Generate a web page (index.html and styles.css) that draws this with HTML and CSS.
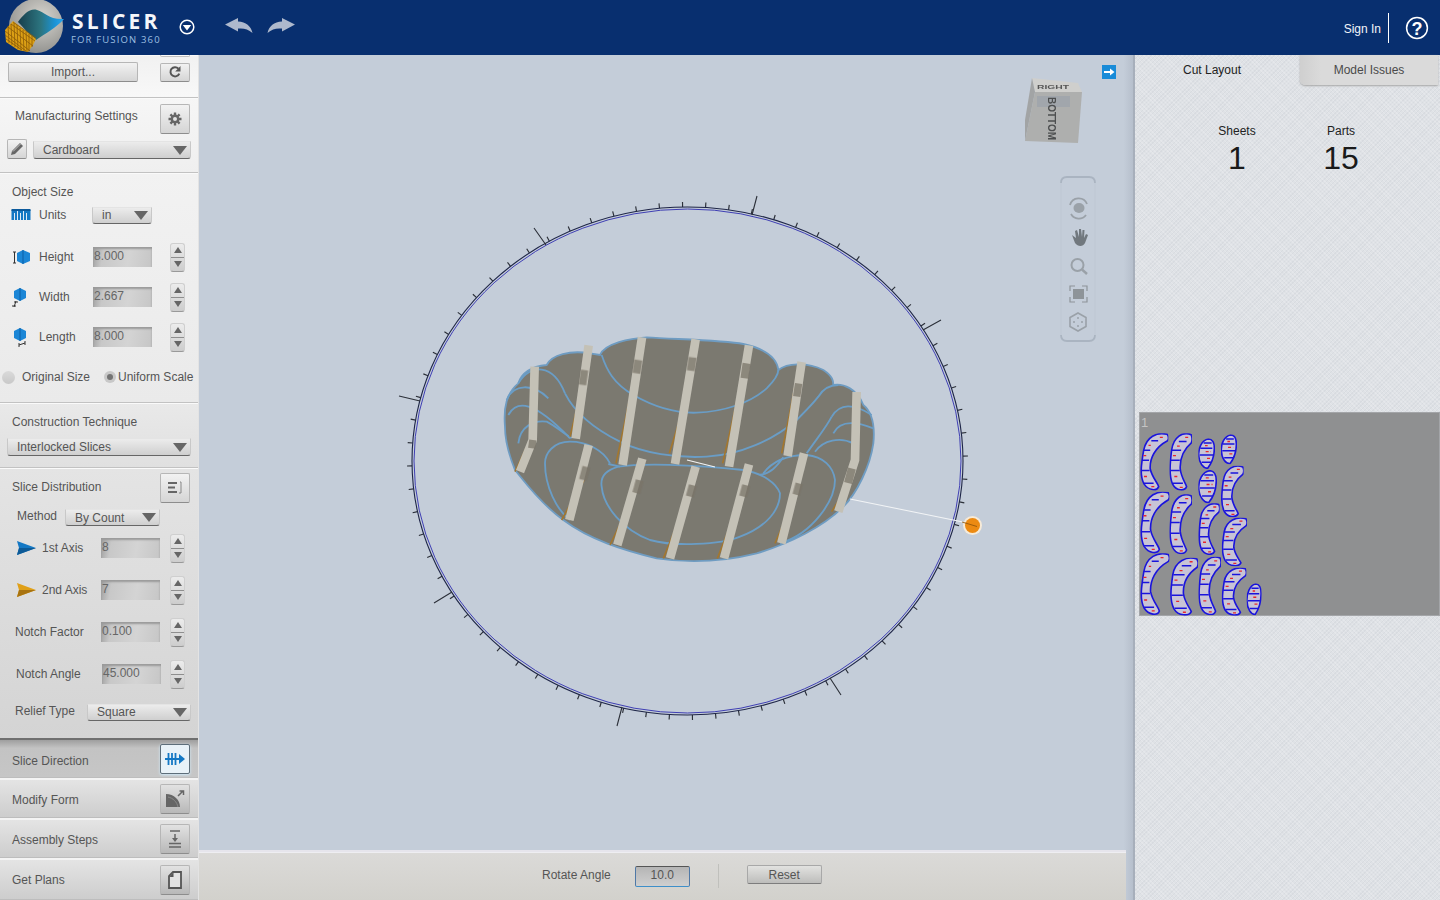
FILE: index.html
```html
<!DOCTYPE html>
<html lang="en">
<head>
<meta charset="utf-8">
<title>Slicer for Fusion 360</title>
<link rel="stylesheet" href="styles.css">
</head>
<body>
<header class="topbar">
  <div class="brand">
    <svg class="logo" width="68" height="55" viewBox="0 0 68 55">
      <defs>
        <linearGradient id="sw" x1="0" y1="0" x2="1" y2="0"><stop offset="0" stop-color="#173e4c"/><stop offset=".5" stop-color="#2c7580"/><stop offset=".8" stop-color="#1b93d6"/><stop offset="1" stop-color="#2aa8f0"/></linearGradient>
        <radialGradient id="disc" cx=".6" cy=".35" r=".7"><stop offset="0" stop-color="#d8d6d0"/><stop offset="1" stop-color="#8f8f8c"/></radialGradient>
      </defs>
      <circle cx="36" cy="26" r="27" fill="url(#disc)"/>
      <path d="M18 22 C24 14 30 8 37 10 C45 12 49 20 64 19 C56 28 46 33 36 40 C30 36 24 28 18 22Z" fill="url(#sw)"/>
      <path d="M5 30 L13 21 L36 39 L33 45 L28 52 L18 50 L6 42Z" fill="#dca015"/>
      <g stroke="#8a5a08" stroke-width=".8" fill="none">
        <path d="M5 31 L30 51M5 35 L26 51M6 39 L22 50M8 27 L33 46M11 24 L35 41M13 22 L36 38"/>
        <path d="M8 26 L9 43M11 24 L12 45M14 23 L15 47M17 25 L18 49M20 28 L21 50M23 30 L24 51M26 32 L27 52M29 34 L29 51M32 36 L32 47"/>
      </g>
    </svg>
    <div class="wordmark">
      <div class="wm-main">SLICER</div>
      <div class="wm-sub">FOR FUSION 360</div>
    </div>
    <svg class="menu-dot" width="16" height="16" viewBox="0 0 16 16"><circle cx="8" cy="8" r="6.8" fill="none" stroke="#fff" stroke-width="1.5"/><path d="M3.800 6 H12.200 L8 11.400Z" fill="#fff"/></svg>
    <svg class="hist" width="28" height="18" viewBox="0 0 28 18"><path d="M0 7.500 L13 1 V4.500 C21 5 26 9 27.500 16 C23 12 19 11 13 11.500 V14.500Z" fill="#aeb9cd"/></svg>
    <svg class="hist" width="28" height="18" viewBox="0 0 28 18"><path d="M28 7.500 L15 1 V4.500 C7 5 2 9 .5 16 C5 12 9 11 15 11.500 V14.500Z" fill="#aeb9cd"/></svg>
  </div>
  <div class="account">
    <span class="signin">Sign In</span>
    <span class="sep"></span>
    <svg width="24" height="24" viewBox="0 0 24 24"><circle cx="12" cy="12" r="10.400" fill="none" stroke="#fff" stroke-width="1.500"/><text x="12" y="18.500" text-anchor="middle" class="help-q">?</text></svg>
  </div>
</header>

<main class="app">
  <aside class="side">
    <section class="sec sec-import">
      <div class="clipped"></div>
      <div class="line">
        <button class="btn btn-import">Import...</button>
        <button class="btn btn-refresh">
          <svg width="14" height="14" viewBox="0 0 14 14"><path d="M11.300 8.600 A4.600 4.600 0 1 1 10.400 3.600" fill="none" stroke="#555" stroke-width="2"/><path d="M12.500 1 V6.400 H7.200Z" fill="#555"/></svg>
        </button>
      </div>
    </section>

    <section class="sec sec-mfg">
      <div class="line mfg-title">
        <span class="lbl mfg-lbl">Manufacturing Settings</span>
        <button class="btn btn-square">
          <svg width="16" height="16" viewBox="0 0 16 16"><circle cx="8" cy="8" r="3.200" fill="none" stroke="#666" stroke-width="2.400"/><path d="M8 1.500V14.500M1.500 8H14.500M3.400 3.400L12.600 12.600M12.600 3.400L3.400 12.600" stroke="#666" stroke-width="2.400" stroke-dasharray="3 7"/></svg>
        </button>
      </div>
      <div class="line mfg-pick">
        <button class="btn btn-pencil">
          <svg width="16" height="16" viewBox="0 0 16 16"><path d="M2 14 L3 10 L11 2 L14 5 L6 13Z" fill="#666"/><path d="M4 10.500L11.500 3" stroke="#ddd" stroke-width=".8"/></svg>
        </button>
        <div class="select sel-mfg"><span>Cardboard</span><i class="caret"></i></div>
      </div>
    </section>

    <section class="sec sec-size">
      <div class="lbl sec-title">Object Size</div>
      <div class="fld fld-units">
        <svg class="fld-ico" width="19" height="12" viewBox="0 0 19 12"><rect x="0" y="1" width="19" height="10" fill="#1478c4"/><path d="M3 4V11M6 2V11M9 4V11M12 2V11M15 4V11" stroke="#dfeaf5" stroke-width="1"/><rect y="0" width="19" height="2" fill="#0c5a9c"/></svg>
        <span class="lbl fld-lbl">Units</span>
        <div class="select sel-units"><span>in</span><i class="caret"></i></div>
      </div>
      <div class="fld fld-h">
        <svg class="fld-ico" width="20" height="18" viewBox="0 0 20 18"><path d="M2 4H5M3.500 4V15M2 15H5" stroke="#333" stroke-width="1"/><path d="M6 5 L12 2 L19 5 V13 L12 16 L6 13Z" fill="#1b86d6"/><path d="M12 2V16" stroke="#0b5ea6"/></svg>
        <span class="lbl fld-lbl">Height</span>
        <div class="input inp-size">8.000</div>
        <div class="stepper"><i class="up"></i><i class="dn"></i></div>
      </div>
      <div class="fld fld-h">
        <svg class="fld-ico" width="20" height="20" viewBox="0 0 20 20"><path d="M3 4 L9 1 L15 4 V11 L9 14 L3 11Z" fill="#1b86d6"/><path d="M9 1V14" stroke="#0b5ea6"/><path d="M5 14 L3 20M3 15H7M1 19H5" stroke="#333" stroke-width="1"/></svg>
        <span class="lbl fld-lbl">Width</span>
        <div class="input inp-size">2.667</div>
        <div class="stepper"><i class="up"></i><i class="dn"></i></div>
      </div>
      <div class="fld fld-h">
        <svg class="fld-ico" width="20" height="20" viewBox="0 0 20 20"><path d="M3 4 L9 1 L15 4 V11 L9 14 L3 11Z" fill="#1b86d6"/><path d="M9 1V14" stroke="#0b5ea6"/><path d="M8 18 L14 16M8 16V20M14 14V18" stroke="#333" stroke-width="1"/></svg>
        <span class="lbl fld-lbl">Length</span>
        <div class="input inp-size">8.000</div>
        <div class="stepper"><i class="up"></i><i class="dn"></i></div>
      </div>
      <div class="radios">
        <i class="radio"></i><span class="lbl">Original Size</span>
        <i class="radio on"></i><span class="lbl">Uniform Scale</span>
      </div>
    </section>

    <section class="sec sec-tech">
      <div class="lbl sec-title">Construction Technique</div>
      <div class="select sel-tech"><span>Interlocked Slices</span><i class="caret"></i></div>
    </section>

    <section class="sec sec-dist">
      <div class="line dist-title">
        <span class="lbl">Slice Distribution</span>
        <button class="btn btn-square">
          <svg width="16" height="16" viewBox="0 0 16 16"><path d="M1 3H10M1 7.500H8M1 12H10" stroke="#666" stroke-width="2"/><path d="M13 2H14V13H12" fill="none" stroke="#888"/></svg>
        </button>
      </div>
      <div class="method">
        <span class="lbl method-lbl">Method</span>
        <div class="select sel-method"><span>By Count</span><i class="caret"></i></div>
      </div>
      <div class="axis">
        <svg class="axis-ico" width="20" height="14" viewBox="0 0 20 14"><path d="M1 0 L20 7 L1 14 L3 7Z" fill="#1478c4"/><path d="M3 7 L20 7 L1 14Z" fill="#0d5a96"/></svg>
        <span class="lbl axis-lbl">1st Axis</span>
        <div class="input inp-axis">8</div>
        <div class="stepper"><i class="up"></i><i class="dn"></i></div>
      </div>
      <div class="axis">
        <svg class="axis-ico" width="20" height="14" viewBox="0 0 20 14"><path d="M1 0 L20 7 L1 14 L3 7Z" fill="#e0a018"/><path d="M3 7 L20 7 L1 14Z" fill="#a87310"/></svg>
        <span class="lbl axis-lbl">2nd Axis</span>
        <div class="input inp-axis">7</div>
        <div class="stepper"><i class="up"></i><i class="dn"></i></div>
      </div>
      <div class="axis">
        <span class="lbl notch-lbl">Notch Factor</span>
        <div class="input inp-axis">0.100</div>
        <div class="stepper"><i class="up"></i><i class="dn"></i></div>
      </div>
      <div class="axis">
        <span class="lbl notch-lbl notch-angle">Notch Angle</span>
        <div class="input inp-axis">45.000</div>
        <div class="stepper stepper-angle"><i class="up"></i><i class="dn"></i></div>
      </div>
      <div class="relief">
        <span class="lbl relief-lbl">Relief Type</span>
        <div class="select sel-relief"><span>Square</span><i class="caret"></i></div>
      </div>
    </section>

    <section class="acc acc-on">
      <span class="lbl">Slice Direction</span>
      <button class="btn btn-square btn-active">
        <svg width="20" height="14" viewBox="0 0 20 14"><path d="M0 7H15M3.500 1V13M7 1V13M10.500 1V13" stroke="#1478c4" stroke-width="1.800"/><path d="M14 2 L20 7 L14 12Z" fill="#1478c4"/></svg>
      </button>
    </section>
    <section class="acc">
      <span class="lbl">Modify Form</span>
      <button class="btn btn-square">
        <svg width="20" height="18" viewBox="0 0 20 18"><path d="M1 4 C9 4 15 10 15 17 H1Z" fill="#666"/><path d="M3 7 C8 8 12 12 13 17" fill="none" stroke="#8a8a8a" stroke-width="1"/><path d="M13 6 L18 1M14.500 1H18.500V5" fill="none" stroke="#666" stroke-width="1.500"/></svg>
      </button>
    </section>
    <section class="acc">
      <span class="lbl">Assembly Steps</span>
      <button class="btn btn-square">
        <svg width="16" height="20" viewBox="0 0 16 20"><path d="M3 2H13" stroke="#666" stroke-width="1.500"/><path d="M8 5V11" stroke="#666" stroke-width="1.500"/><path d="M5 9H11L8 13Z" fill="#666"/><path d="M2 14.500H14M2 18H14" stroke="#666" stroke-width="1.500"/></svg>
      </button>
    </section>
    <section class="acc acc-last">
      <span class="lbl">Get Plans</span>
      <button class="btn btn-square">
        <svg width="14" height="18" viewBox="0 0 14 18"><path d="M5 1H13V17H1V5Z" fill="#e2e2e2" stroke="#555" stroke-width="1.800"/><path d="M5.500 1.500V6H1.500Z" fill="#555"/></svg>
      </button>
    </section>
  </aside>

  <div class="stage">
    <svg class="scene" viewBox="199 55 934 845" width="934" height="845">
      <ellipse cx="687.500" cy="461" rx="278" ry="256.500" fill="none" stroke="#2b2f38" stroke-width="5" pathLength="72" stroke-dasharray="0.05 0.95" stroke-dashoffset="-0.76"/>
      <ellipse cx="687.500" cy="461" rx="273.500" ry="252" fill="none" stroke="#3f3fb4" stroke-width="1"/>
      <ellipse cx="687.500" cy="461" rx="275.500" ry="254" fill="none" stroke="#1e2547" stroke-width="1.100"/>
      <g stroke="#2b2f38" stroke-width="1.100">
        <path d="M757 196L752 215M534 228L546 245M399 396L420 401M434 603L452 592M617 726L622 707M841 695L830 678M941 320L923 330"/>
      </g>
      <svg x="490" y="320" width="400" height="260" viewBox="0 0 1200 780">
        <path d="M45 320 C40 260 50 220 85 190 C95 160 120 140 170 135 C185 105 240 90 300 100 L330 105 C345 70 420 55 470 52 C560 58 700 60 760 72 C820 85 860 110 865 150 C890 130 950 125 1000 150 C1030 170 1030 185 1030 195 C1060 190 1100 205 1120 255 C1150 280 1155 320 1150 370 C1140 440 1100 520 1060 560 C1000 620 900 670 800 700 C700 725 600 730 500 715 C400 690 300 660 220 600 C150 550 100 480 75 450 C55 400 45 360 45 320Z" fill="#7b7970" stroke="#6f9cc2" stroke-width="5.500"/>
        <g fill="none" stroke="#6a9dc6" stroke-width="5.500">
          <path d="M335 105 C350 150 370 190 430 225 C500 265 560 280 620 278 C700 275 780 250 830 205 C850 185 865 165 865 150"/>
          <path d="M225 220 C250 270 300 320 390 365 C460 400 560 415 650 410 C750 405 850 360 920 300 C960 260 970 250 985 230 C1000 205 1020 195 1045 195"/>
          <path d="M335 500 C330 470 350 450 385 440 C450 430 600 432 760 450 C820 460 860 490 870 520 C870 570 830 620 750 650 C690 675 550 680 480 660 C400 630 340 560 335 500Z"/>
          <path d="M360 430 C340 390 290 365 240 365 C190 365 165 400 165 430 C165 500 200 570 240 600"/>
          <path d="M820 460 C850 420 900 405 950 405 C1000 410 1030 440 1035 480 C1035 540 970 640 870 670"/>
          <path d="M85 190 C120 130 190 130 225 220"/>
          <path d="M50 240 C70 190 130 190 175 235"/>
          <path d="M55 285 C80 240 130 240 240 355"/>
          <path d="M85 370 C90 320 130 300 170 305 C200 320 220 340 245 355"/>
          <path d="M1025 290 C1050 250 1090 250 1145 285"/>
          <path d="M1030 340 C1050 300 1100 305 1150 325"/>
          <path d="M975 395 C1000 360 1050 350 1090 370"/>
          <path d="M950 400 C985 350 1010 320 1025 290"/>
          <path d="M810 464 C840 462 860 440 880 412"/>
          <path d="M355 432 L390 440"/>
        </g>
        <g fill="none" stroke="#a3772f" stroke-width="5">
          <path d="M440 140 L378 430M600 200 L538 400M760 160 L698 430M915 200 L875 400M277 200 L240 350M440 510 L360 675M600 520 L520 715M760 520 L682 715M925 510 L855 670M282 480 L215 600M1085 480 L1025 575M120 360 L75 455"/>
        </g>
        <g fill="none" stroke="#c4c1b6" stroke-width="26">
          <path d="M456 52 L398 435"/>
          <path d="M617 58 L555 432"/>
          <path d="M777 76 L717 440"/>
          <path d="M935 126 L893 408"/>
          <path d="M296 76 L257 356"/>
          <path d="M134 140 L128 360 L90 455"/>
          <path d="M1100 216 L1095 420 L1045 575"/>
          <path d="M457 416 L382 675"/>
          <path d="M617 440 L540 715"/>
          <path d="M777 433 L702 715"/>
          <path d="M942 400 L874 670"/>
          <path d="M296 375 L238 600"/>
        </g>
        <g fill="#7a7468" opacity=".75">
          <rect x="430" y="120" width="24" height="40" transform="rotate(8 442 140)"/>
          <rect x="593" y="112" width="24" height="40" transform="rotate(8 605 132)"/>
          <rect x="755" y="130" width="24" height="45" transform="rotate(8 767 150)"/>
          <rect x="912" y="190" width="22" height="40" transform="rotate(8 923 210)"/>
          <rect x="270" y="150" width="22" height="45" transform="rotate(8 281 170)"/>
          <rect x="116" y="360" width="22" height="25" transform="rotate(8 127 372)"/>
          <rect x="1068" y="445" width="24" height="45" transform="rotate(15 1080 467)"/>
          <rect x="432" y="480" width="24" height="40" transform="rotate(15 444 500)"/>
          <rect x="592" y="495" width="24" height="35" transform="rotate(15 604 512)"/>
          <rect x="752" y="495" width="24" height="35" transform="rotate(15 764 512)"/>
          <rect x="912" y="490" width="22" height="35" transform="rotate(15 923 507)"/>
          <rect x="272" y="440" width="24" height="40" transform="rotate(15 284 460)"/>
        </g>
      </svg>
      <path d="M850 499L963 522M687 460L715 467" stroke="#f2f4f6" stroke-width="1.100"/>
      <circle cx="972.500" cy="525.500" r="9.500" fill="#f6ead8"/>
      <circle cx="972.500" cy="525.500" r="7.500" fill="#ec8a12"/>
      <path d="M962 522L977 526.500" stroke="#8a5008" stroke-width=".8"/>

      <g class="cube">
        <path d="M1032 78 L1078 83 L1082 92 L1035 92Z" fill="#cfcfcd"/>
        <path d="M1035 92 L1082 92 L1078 143 L1025 141Z" fill="#aeafae"/>
        <path d="M1032 78 L1035 92 L1025 141 L1025 120Z" fill="#a2a4a5"/>
        <rect x="1037" y="96" width="33" height="11" fill="#98a0aa" opacity=".6"/>
        <text class="cube-t" transform="translate(1047.500 97) rotate(90)" textLength="43" lengthAdjust="spacingAndGlyphs">BOTTOM</text>
        <text class="cube-r" x="1037" y="88.500" textLength="32" lengthAdjust="spacingAndGlyphs">RIGHT</text>
      </g>

      <path d="M1061 183 Q1061 177 1067 177 H1089 Q1095 177 1095 183 M1061 335 Q1061 341 1067 341 H1089 Q1095 341 1095 335" fill="none" stroke="#aab4c1" stroke-width="1.800"/>
      <path d="M1061 183V335M1095 183V335" stroke="#bec7d3" stroke-width="1" fill="none"/>
      <g fill="#9aa1a8" stroke="none">
        <ellipse cx="1079" cy="208" rx="5.500" ry="5"/>
        <path d="M1070 205 A9 9 0 0 1 1087 204M1071 214 A9 9 0 0 0 1086 215" fill="none" stroke="#9aa1a8" stroke-width="1.800"/>
        <path d="M1072 235 L1075 243 C1078 247 1083 247 1085 243 L1088 235 L1086 234 L1084 238 L1084.500 230 L1082.500 230 L1082 237 L1081 229 L1079 229 L1079 237 L1077 230 L1075 231 L1076 238Z" fill="#71787e"/>
        <circle cx="1077.500" cy="265" r="6" fill="none" stroke="#9aa1a8" stroke-width="2"/>
        <path d="M1082 269.500L1087 274" stroke="#9aa1a8" stroke-width="2.400"/>
        <rect x="1073" y="289" width="11" height="10" fill="#8e9499"/>
        <path d="M1070 291V286H1075M1082 286H1087V291M1087 297V302H1082M1075 302H1070V297" fill="none" stroke="#8e9499" stroke-width="1.200"/>
        <path d="M1078 313 L1086 317.500 V326.500 L1078 331 L1070 326.500 V317.500Z" fill="none" stroke="#9aa1a8" stroke-width="1.600"/>
        <circle cx="1078" cy="318" r="1"/><circle cx="1074" cy="322" r="1"/><circle cx="1082" cy="322" r="1"/><circle cx="1078" cy="326" r="1"/>
      </g>
    </svg>
    <button class="flip">
      <svg width="14" height="14" viewBox="0 0 14 14"><rect width="14" height="14" fill="#188bd8"/><path d="M2 7H9" stroke="#fff" stroke-width="2"/><path d="M8 3.500L12.500 7L8 10.500Z" fill="#fff"/></svg>
    </button>
    <div class="rotbar">
      <span class="lbl rot-lbl">Rotate Angle</span>
      <div class="rot-input">10.0</div>
      <span class="rot-sep"></span>
      <button class="btn btn-reset">Reset</button>
    </div>
  </div>

  <aside class="cut">
    <div class="tabs">
      <div class="tab tab-on">Cut Layout</div>
      <div class="tab tab-off">Model Issues</div>
    </div>
    <div class="stats">
      <div class="stat"><div class="stat-k">Sheets</div><div class="stat-v">1</div></div>
      <div class="stat"><div class="stat-k">Parts</div><div class="stat-v">15</div></div>
    </div>
    <div class="sheet">
      <span class="sheet-no">1</span>
      <svg width="301" height="204" viewBox="12 21 903 612">
        <defs>
          <symbol id="cres" viewBox="0 0 100 170" preserveAspectRatio="none">
            <path class="part" d="M96 3 C60 -5 22 10 13 50 C5 90 -2 125 14 150 C30 170 60 172 66 158 C62 146 42 130 36 105 C34 75 52 42 97 22 C102 16 100 8 96 3Z"/>
            <path class="rib" d="M14 50H36M7 80H32M6 110H34M14 148H48M40 22H64"/>
            <path class="spk" d="M14 128H30M70 12H84M12 66H22M30 36H38M40 158H52"/>
          </symbol>
          <symbol id="cres2" viewBox="0 0 100 170" preserveAspectRatio="none">
            <path class="part" d="M96 4 C60 -6 18 10 10 50 C3 90 -2 125 14 150 C30 172 68 172 76 158 C70 146 52 130 48 105 C46 75 62 48 97 28 C103 18 100 10 96 4Z"/>
            <path class="rib" d="M12 50H52M6 80H46M6 110H46M16 148H60M42 24H76"/>
            <path class="spk" d="M22 128H40M70 12H86M16 66H30M34 38H46M46 160H60"/>
          </symbol>
          <symbol id="oval" viewBox="0 0 50 92" preserveAspectRatio="none">
            <path class="part" d="M30 2 C10 5 0 30 1 50 C2 75 15 90 28 90 C40 75 48 55 48 30 C48 12 42 2 30 2Z"/>
            <path class="rib" d="M6 30H42M4 50H44M10 72H38M16 14H40"/>
            <path class="spk" d="M22 40H38M26 60H36M20 22H28"/>
          </symbol>
        </defs>
        <use href="#cres" x="15" y="85" width="85" height="172"/>
        <use href="#cres" x="15" y="260" width="88" height="186"/>
        <use href="#cres" x="15" y="445" width="88" height="186"/>
        <use href="#cres2" x="103" y="85" width="68" height="172"/>
        <use href="#cres2" x="103" y="268" width="68" height="180"/>
        <use href="#cres2" x="105" y="458" width="84" height="174"/>
        <use href="#oval" x="190" y="100" width="50" height="92"/>
        <use href="#oval" x="190" y="195" width="56" height="100"/>
        <use href="#cres2" x="190" y="295" width="64" height="155"/>
        <use href="#cres2" x="190" y="455" width="68" height="176"/>
        <use href="#oval" x="258" y="88" width="48" height="90"/>
        <use href="#cres2" x="258" y="182" width="68" height="155"/>
        <use href="#cres2" x="260" y="338" width="76" height="146"/>
        <use href="#cres2" x="260" y="488" width="74" height="144"/>
        <use href="#oval" x="335" y="535" width="45" height="96"/>
      </svg>
    </div>
  </aside>
</main>
</body>
</html>
```
FILE: styles.css
```css
* { box-sizing: border-box; }
html, body { margin: 0; height: 100%; }
body { width: 1440px; height: 900px; overflow: hidden; font-family: "Liberation Sans", Arial, sans-serif; font-size: 12px; color: #555; background: #c4cdd9; }
button { font: inherit; color: inherit; padding: 0; }

.topbar { height: 55px; background: #082f6f; display: flex; justify-content: space-between; align-items: center; }
.brand { display: flex; align-items: center; height: 55px; }
.logo { flex: none; }
.wordmark { margin-left: 3px; width: 100px; }
.wm-main { font: 700 21px/20px "Open Sans", sans-serif; color: #f4f6fa; letter-spacing: 3.2px; margin-left: 1px; }
.wm-sub { font: 400 9.5px/11px "Open Sans", sans-serif; color: #9dbfe0; letter-spacing: 1.15px; margin-top: 3px; white-space: nowrap; }
.menu-dot { margin-left: 8px; margin-top: -1px; }
.hist { margin-left: 14px; margin-top: -3px; }
.menu-dot + .hist { margin-left: 30px; }
.account { display: flex; align-items: center; padding-right: 11px; }
.signin { color: #f2f5fa; margin-top: 3px; }
.sep { width: 1px; height: 30px; background: #fff; margin: 0 16px 0 7px; }
.help-q { font: 700 18px "Liberation Sans", sans-serif; fill: #fff; }

.app { display: flex; height: 845px; }
.side { width: 199px; flex: none; display: flex; flex-direction: column; background: #e8e8e8; border-right: 1px solid #e3e3e3; overflow: hidden; }
.sec { border-bottom: 1px solid #c2c2c2; box-shadow: inset 0 1px 0 #fafafa; }
.lbl { color: #555; white-space: nowrap; }
.line { display: flex; align-items: center; justify-content: space-between; }

.btn { border: 1px solid #b6b6b6; border-bottom-color: #8d8d8d; border-radius: 2px; background: linear-gradient(#f2f2f2, #d5d5d5); display: flex; align-items: center; justify-content: center; }

.select { display: flex; align-items: center; justify-content: space-between; flex: none; height: 17px; border: 1px solid #c8c8c8; border-top-color: #e4e4e4; border-bottom: 1px solid #666; border-radius: 0 0 3px 3px; background: linear-gradient(#ececec, #cfcfcf); padding: 0 3px 0 9px; color: #555; }
.caret { width: 0; height: 0; border-left: 7px solid transparent; border-right: 7px solid transparent; border-top: 9px solid #666; }

.input { height: 20px; background: linear-gradient(100deg, #9c9c9c 0, #c8c8c8 18%, #d4d4d4 60%, #c6c6c6); box-shadow: inset 0 2px 2px #9a9a9a; color: #666; line-height: 18px; padding-left: 1px; }

.stepper { width: 15px; height: 29px; display: flex; flex-direction: column; align-items: center; border: 1px solid #cfcfcf; border-bottom-color: #999; border-radius: 3px; background: linear-gradient(#ececec, #cdcdcd); flex: none; }
.stepper i { flex: 1; width: 100%; display: flex; align-items: center; justify-content: center; }
.stepper .up { border-bottom: 1px solid #8f8f8f; }
.stepper .up::before { content: ""; border-left: 4px solid transparent; border-right: 4px solid transparent; border-bottom: 6px solid #666; }
.stepper .dn::before { content: ""; border-left: 4px solid transparent; border-right: 4px solid transparent; border-top: 6px solid #666; }

/* import */
.sec-import { height: 43px; background: linear-gradient(#f1f1f1, #f8f8f8); padding: 7px 8px 0 8px; position: relative; }
.clipped { position: absolute; left: 160px; top: 0; width: 30px; height: 2px; border: 1px solid #c0c0c0; border-top: 0; border-radius: 0 0 2px 2px; }
.btn-import { width: 130px; height: 20px; }
.btn-refresh { width: 30px; height: 19px; }

/* manufacturing */
.sec-mfg { height: 75px; background: linear-gradient(#f6f6f6, #efefef); padding: 6px 7px 0 7px; }
.mfg-title { align-items: flex-start; }
.mfg-title .btn-square { margin-right: 1px; }
.mfg-lbl { margin: 5px 0 0 8px; }
.btn-square { width: 30px; height: 30px; flex: none; }
.mfg-pick { margin-top: 5px; align-items: flex-end; }
.btn-pencil { width: 20px; height: 20px; flex: none; }
.sel-mfg { width: 158px; height: 18px; margin-left: 6px; }

/* size */
.sec-size { height: 230px; background: linear-gradient(#f2f2f2, #eaeaea); padding-top: 12px; }
.sec-title { margin-left: 12px; line-height: 15px; }
.fld { display: flex; align-items: center; padding-left: 10px; height: 40px; }
.fld-ico { width: 22px; flex: none; margin-right: 7px; }
.fld-lbl { width: 53px; flex: none; }
.fld-units { height: 24px; margin-top: 3px; margin-bottom: 10px; }
.fld-units .sel-units { width: 60px; height: 17px; }
.inp-size { width: 59px; margin-right: 18px; margin-left: 1px; }
.radios { display: flex; align-items: center; margin: 10px 0 0 2px; height: 20px; }
.radios .lbl:first-of-type { margin-right: 14px; }
.radio { width: 13px; height: 13px; border-radius: 50%; background: linear-gradient(#dadada, #c8c8c8); margin-right: 7px; flex: none; display: flex; align-items: center; justify-content: center; }
.radio.on { width: 12px; height: 12px; margin-right: 2px; background: #c8c8c8; }
.radio.on::after { content: ""; width: 6px; height: 6px; border-radius: 50%; background: #737373; }

/* technique */
.sec-tech { height: 65px; background: linear-gradient(#e9e9e9, #e0e0e0); padding-top: 12px; }
.sel-tech { width: 184px; margin: 8px 0 0 7px; height: 18px; }

/* distribution */
.sec-dist { height: 270px; background: linear-gradient(#e4e4e4, #d4d4d4); padding-top: 5px; border-bottom: 0; }
.dist-title { padding-right: 8px; }
.dist-title .lbl { margin: -2px 0 0 12px; }
.method { display: flex; align-items: center; height: 17px; margin-top: 6px; }
.method-lbl { margin-left: 17px; width: 48px; margin-top: -3px; }
.sel-method { width: 95px; height: 17px; }
.axis { display: flex; align-items: center; height: 42px; padding-left: 15px; }
.method + .axis { margin-top: 1px; }
.axis-ico { flex: none; width: 20px; margin: 0 6px 0 1px; }
.axis-lbl { width: 59px; flex: none; }
.inp-axis { width: 59px; margin-right: 10px; flex: none; }
.notch-lbl { width: 86px; flex: none; }
.notch-angle { margin-left: 1px; }
.notch-angle + .input { margin-right: 9px; }
.relief { display: flex; align-items: center; margin: 7px 0 0 15px; height: 20px; }
.relief-lbl { width: 72px; margin-top: -2px; }
.sel-relief { width: 104px; height: 17px; }

/* accordion */
.acc { height: 40px; flex: none; display: flex; align-items: center; justify-content: space-between; padding: 0 8px 0 12px; background: linear-gradient(#e4e4e4, #cdcdcd); border-top: 2px solid #f4f4f4; border-bottom: 1px solid #bdbdbd; }
.acc > .lbl { margin-top: 2px; }
.acc-on { background: linear-gradient(#9e9e9e, #c3c3c3 22%, #c6c6c6); border-top: 2px solid #6f6f6f; }
.acc-on > .lbl { margin-top: 5px; }
.acc-last { flex: 1; }
.acc-last > .lbl { margin-top: 0; }
.acc .btn-square { height: 30px; background: linear-gradient(#e2e2e2, #b8b8b8); }
.acc .btn-active { background: #e8f2f8; border: 1px solid #5d6e7a; box-shadow: 0 1px 3px #cfeafa; }

/* stage */
.stage { position: relative; width: 934px; flex: none; display: flex; flex-direction: column; justify-content: flex-end; background: linear-gradient(90deg, #c4cdd9 99%, #b6bfcc); }
.scene { position: absolute; left: 0; top: 0; }
.flip { position: absolute; left: 903px; top: 10px; width: 14px; height: 14px; border: 0; background: none; }
.flip svg { display: block; }
.cube-t { font: 700 11px "Liberation Sans", sans-serif; fill: #4d4f50; }
.cube-r { font: 700 6px "Liberation Sans", sans-serif; fill: #555; }
.rotbar { position: relative; height: 50px; margin-right: 7px; display: flex; align-items: center; padding-left: 343px; background: linear-gradient(#dbdad8, #d2d1cc); border-top: 2px solid #e6e5ec; box-shadow: inset 0 1px 0 #eeeef2; }
.rot-lbl { margin-top: -3px; }
.rot-input { width: 55px; height: 21px; margin-left: 24px; border: 1px solid #4f78a6; border-top-color: #555; border-bottom-color: #3e8fc9; border-radius: 2px; background: linear-gradient(#b5b5b5, #cfcfcf); text-align: center; line-height: 17px; color: #555; }
.rot-sep { width: 1px; height: 24px; background: #c0c0bc; margin: 0 28px; }
.btn-reset { width: 75px; height: 19px; background: linear-gradient(#e2e2e0, #bdbdbb); border-color: #a8a8a8 #a8a8a8 #7d7d7d; margin-top: -3px; }

/* right panel */
.cut { width: 307px; flex: none; background-color: #dfe2e6; background-image: repeating-linear-gradient(45deg, rgba(255,255,255,.18) 0 1px, transparent 1px 3px), repeating-linear-gradient(-45deg, rgba(170,176,186,.14) 0 1px, transparent 1px 3px); border-left: 2px solid #a7afbb; color: #1c1c1c; display: flex; flex-direction: column; }
.tabs { display: flex; height: 30px; }
.tab { display: flex; align-items: center; justify-content: center; font-size: 12px; }
.tab-on { width: 165px; color: #222; padding-right: 11px; }
.tab-off { width: 138px; color: #4a4a4a; background: linear-gradient(90deg, #cfcfcf, #dadada 15%); border-radius: 0 0 0 5px; box-shadow: 0 1px 2px #a6a6a6; }
.stats { display: grid; grid-template-columns: 104px 104px; padding-left: 50px; margin-top: 39px; }
.stat { text-align: center; }
.stat-k { line-height: 15px; color: #222; }
.stat-v { font-size: 32px; line-height: 36px; color: #1a1a1a; margin-top: 1px; }
.sheet { position: relative; margin: 236px 0 0 4px; width: 301px; height: 204px; background: #8f9091; box-shadow: inset 0 0 0 1px #a3a5a8; }
.sheet svg { display: block; }
.sheet-no { position: absolute; left: 2px; top: 3px; color: #c4c4c4; font-size: 13px; }
.part { fill: #c8c4d6; stroke: #1a14dc; stroke-width: 1.600px; vector-effect: non-scaling-stroke; }
.rib { fill: none; stroke: #1a14dc; stroke-width: 1.500px; vector-effect: non-scaling-stroke; }
.spk { fill: none; stroke: #e8262c; stroke-width: 1.300px; stroke-dasharray: 3 2; vector-effect: non-scaling-stroke; }
```
